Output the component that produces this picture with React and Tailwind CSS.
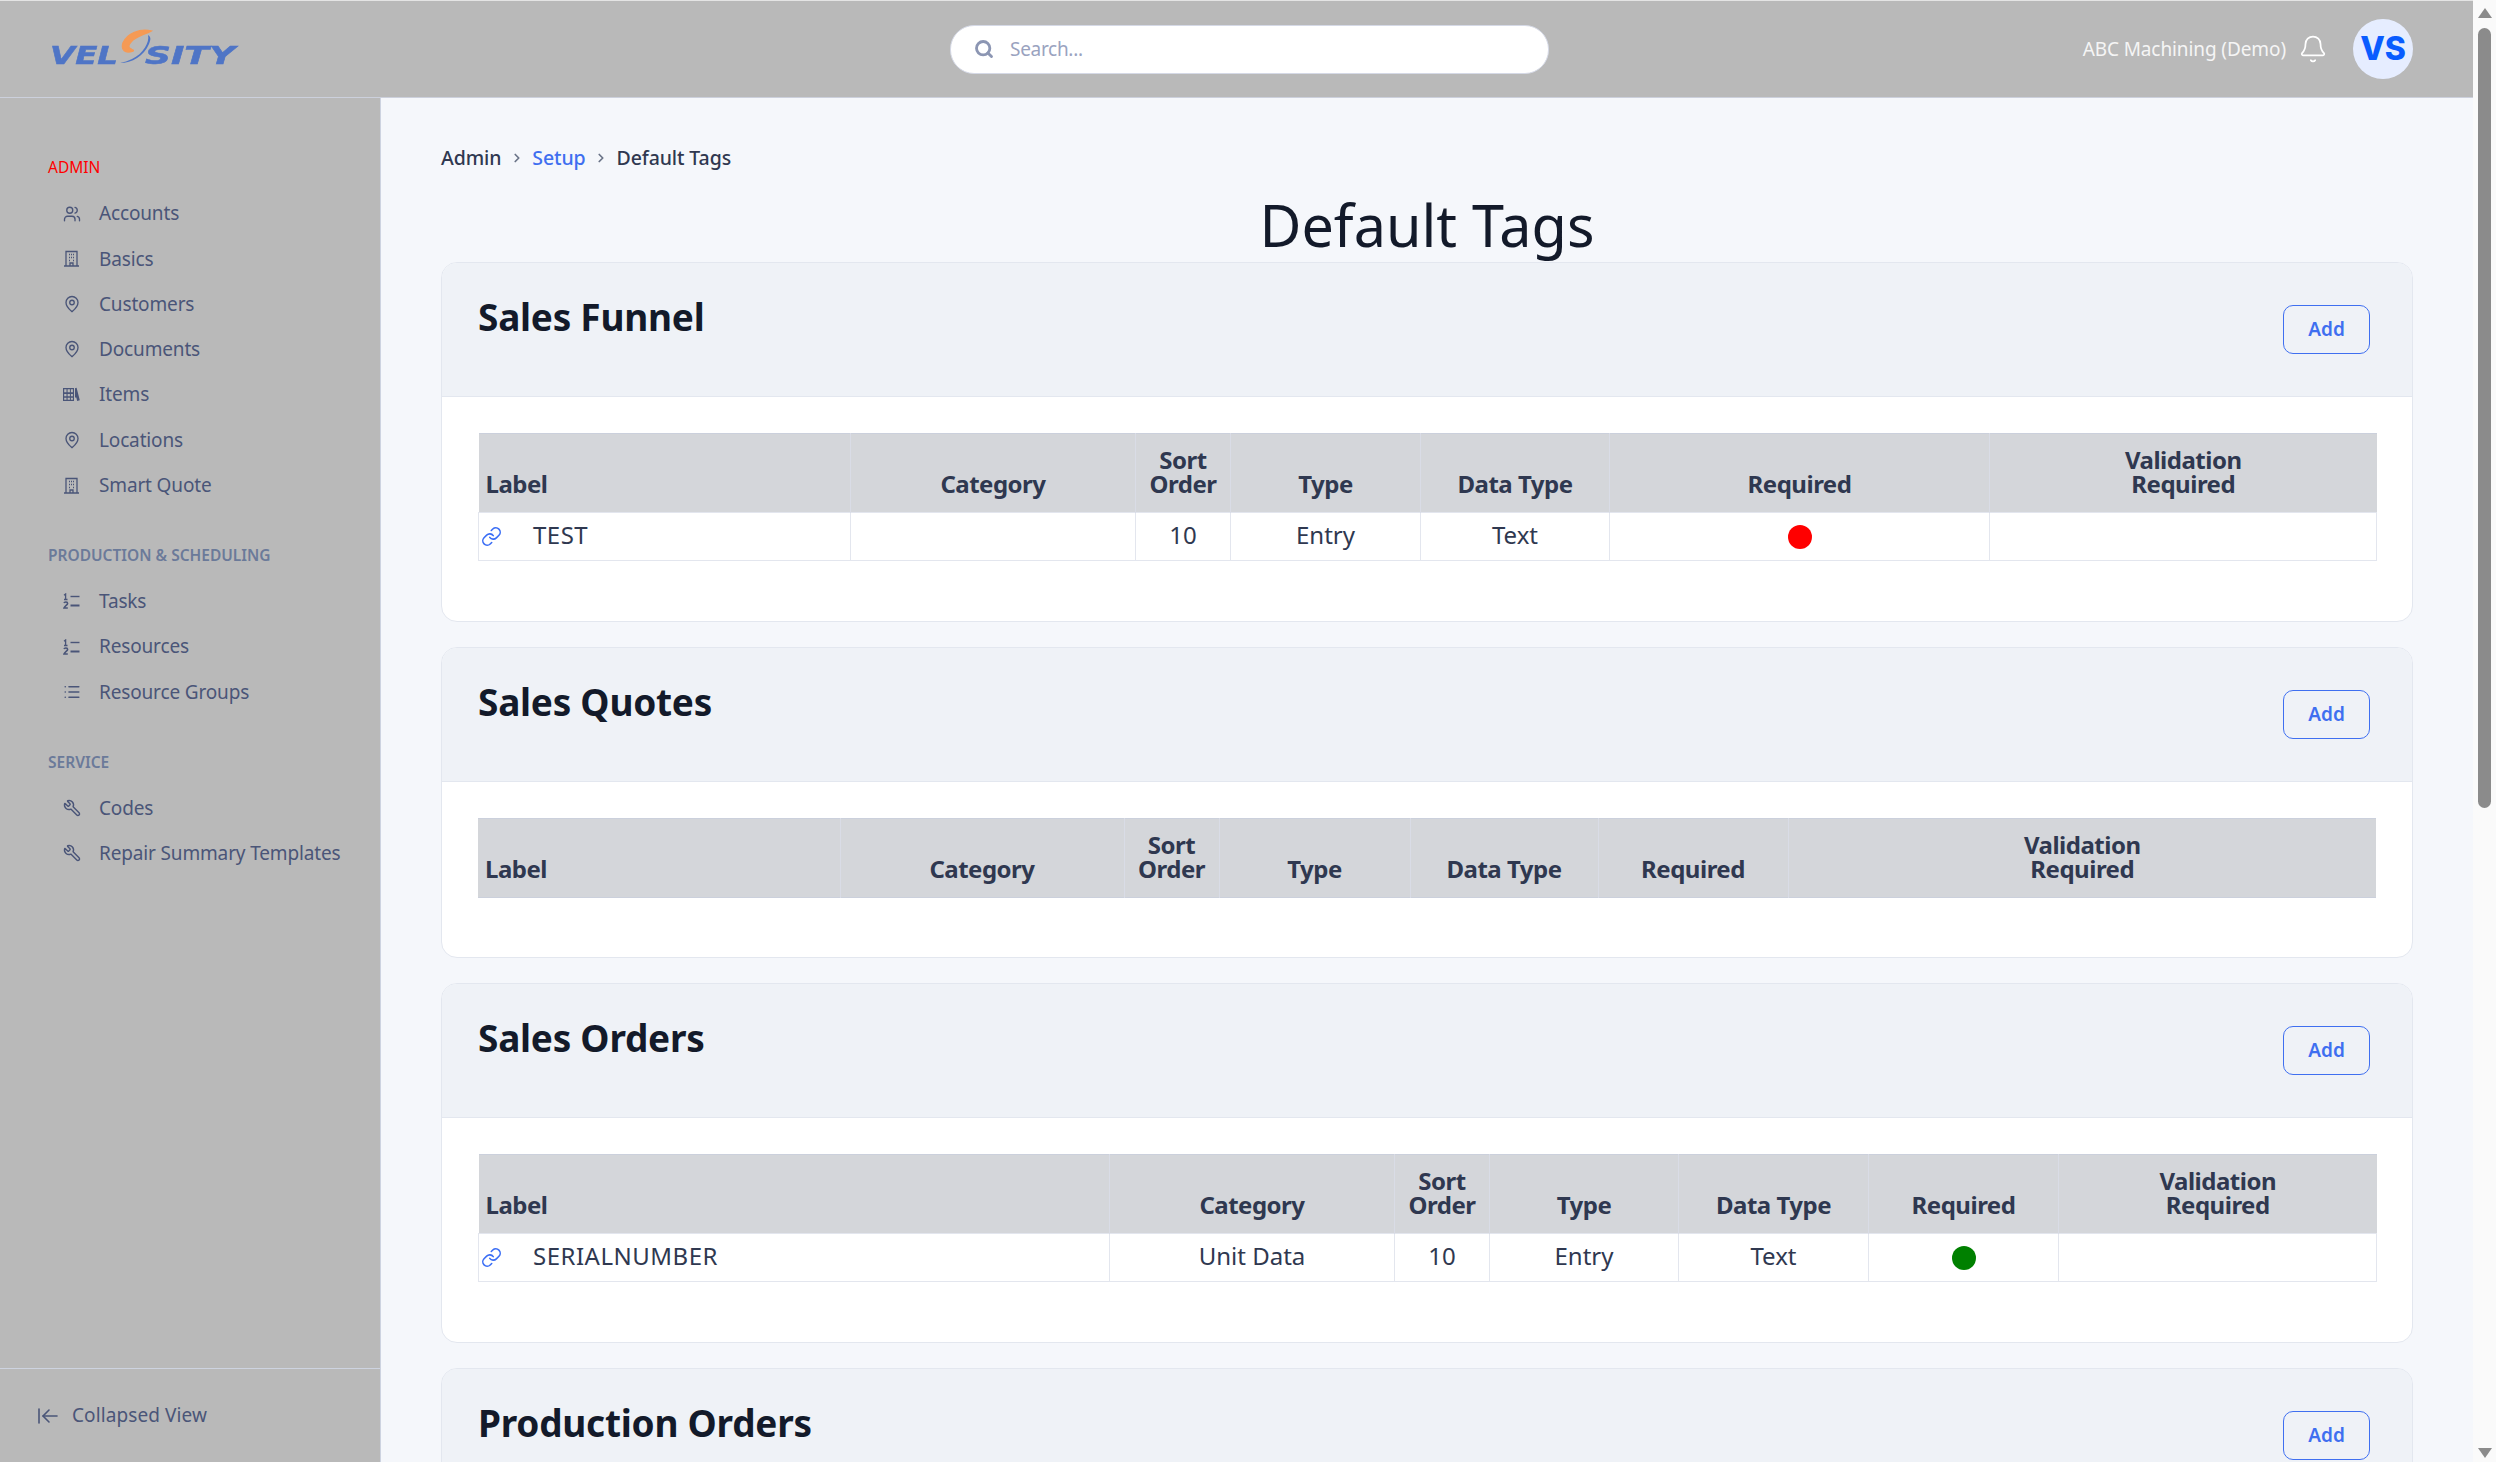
import React from "react";
import { Search, Bell, ChevronRight, Link as LinkIcon, Users, MapPin, List, Wrench, ArrowLeftToLine } from "lucide-react";

const Building = () => (
  <svg width="17" height="17" viewBox="0 0 17 17" fill="none" stroke="currentColor" strokeWidth="1.3">
    <path d="M3 16V1.5h11V16M1 16h15M7 16v-3h3v3" />
    <path d="M6 4.5h1M10 4.5h1M6 7.5h1M10 7.5h1M6 10.5h1M10 10.5h1M8 4.5h1M8 7.5h1" strokeWidth="1.5" />
  </svg>
);
const Books = () => (
  <svg width="17" height="15" viewBox="0 0 17 15" fill="currentColor">
    <path d="M0 1h11v13H0zM1.2 2.2v3h2.3v-3zm3.4 0v3h2.3v-3zm3.3 0v3h2v-3zM1.2 7v2.2h2.3V7zm3.4 0v2.2h2.3V7zm3.3 0v2.2h2V7zM1.2 10.8v2h2.3v-2zm3.4 0v2h2.3v-2zm3.3 0v2h2v-2z" fillRule="evenodd" />
    <path d="M12 1.2l1.6-.5 3.2 12.6-2.6.7-.9-3.4H12z" />
  </svg>
);
const Ordered = () => (
  <svg width="17" height="16" viewBox="0 0 17 16" fill="none" stroke="currentColor">
    <path d="M7.5 3.5H16.5" strokeWidth="1.4" />
    <path d="M7.5 12.5H16.5" strokeWidth="2" />
    <path d="M1 2.2L2.6 1V6M1 6.5H4.5" strokeWidth="1.3" />
    <path d="M1 10C1.5 8.6 4.6 8.6 4.6 10.4C4.6 11.8 1.6 12.8 1 15H4.8" strokeWidth="1.6" />
  </svg>
);

const nav = [
  { title: "ADMIN", red: true, items: [["Accounts", "users"], ["Basics", "building"], ["Customers", "pin"], ["Documents", "pin"], ["Items", "books"], ["Locations", "pin"], ["Smart Quote", "building"]] },
  { title: "PRODUCTION & SCHEDULING", items: [["Tasks", "ordered"], ["Resources", "ordered"], ["Resource Groups", "list"]] },
  { title: "SERVICE", items: [["Codes", "wrench"], ["Repair Summary Templates", "wrench"]] },
];

function NavIcon({ k }) {
  if (k === "users") return <Users size={18} strokeWidth={1.8} />;
  if (k === "building") return <Building />;
  if (k === "pin") return <MapPin size={18} strokeWidth={1.8} />;
  if (k === "books") return <Books />;
  if (k === "ordered") return <Ordered />;
  if (k === "list") return <List size={18} strokeWidth={2.2} />;
  return <Wrench size={18} strokeWidth={1.9} className="-scale-x-100" />;
}

const Logo = () => (
  <svg width="200" height="50" viewBox="0 0 200 50" className="blur-[0.4px]">
    <text x="2" y="35" textLength="68" lengthAdjust="spacingAndGlyphs" fontFamily="DejaVu Sans" fontWeight="700" fontStyle="italic" fontSize="25" fill="#4f75c6" stroke="#4f75c6" strokeWidth="0.5">VEL</text>
    <text x="97" y="35" textLength="90" lengthAdjust="spacingAndGlyphs" fontFamily="DejaVu Sans" fontWeight="700" fontStyle="italic" fontSize="25" fill="#4f75c6" stroke="#4f75c6" strokeWidth="0.5">SITY</text>
    <path d="M72 34C84 34 96 27 101 15C103 10 103 8 100 6C102 13 95 25 84 30C80 32 76 33 72 34Z" fill="#4f75c6" />
    <path d="M103 2C92-1 79 5 75 14C73 21 77 25 85 22C86 21 84 21 83 20C80 19 80 16 83 13C87 8 95 6 103 2Z" fill="#f59a55" stroke="#f59a55" strokeWidth="1.5" />
  </svg>
);

function Card({ title, widths, rows }) {
  return (
    <section className="shrink-0 overflow-hidden rounded-2xl border border-[#e3e7ef] bg-white">
      <div className="flex h-[134px] items-start justify-between border-b border-[#e3e7ef] bg-[#eff2f7] pl-[36px] pr-[42px]">
        <h2 className="mt-[29px] text-[37px] leading-[50px] font-bold tracking-[-0.25px] text-[#131a2a]">{title}</h2>
        <button className="mt-[42px] h-[49px] w-[87px] rounded-[10px] border border-[#3f6ff0] text-[19px] font-semibold text-[#3f6ff0]">Add</button>
      </div>
      {widths && (
        <div className="pt-[36px] pr-[37px] pb-[59.5px] pl-[36px]">
          <table className="w-[1898px] table-fixed border-collapse">
            <colgroup>
              {widths.map((w, i) => <col key={i} style={{ width: w }} />)}
            </colgroup>
            <thead>
              <tr className="h-[79px] border-y border-[#cbd0dc] bg-[#d4d6da] text-[24px] leading-[24px] font-bold tracking-[-0.5px] text-[#2f3850]">
                <th className="border-r border-[#d9dce6] pl-[7px] text-left align-bottom font-bold"><div className="pb-[16px]">Label</div></th>
                <th className="border-r border-[#d9dce6] align-bottom font-bold"><div className="pb-[16px]">Category</div></th>
                <th className="border-r border-[#d9dce6] align-bottom font-bold"><div className="pb-[16px]">Sort<br />Order</div></th>
                <th className="border-r border-[#d9dce6] align-bottom font-bold"><div className="pb-[16px]">Type</div></th>
                <th className="border-r border-[#d9dce6] align-bottom font-bold"><div className="pb-[16px]">Data Type</div></th>
                <th className="border-r border-[#d9dce6] align-bottom font-bold"><div className="pb-[16px]">Required</div></th>
                <th className="align-bottom font-bold"><div className="pb-[16px]">Validation<br />Required</div></th>
              </tr>
            </thead>
            <tbody>
              {rows.map((r, i) => (
                <tr key={i} className="h-[48px] text-center text-[24px] leading-[30px] text-[#2f3850]">
                  <td className="border border-[#e3e6ee] px-[2px] text-left">
                    <div className="flex items-center pb-[3px]">
                      <LinkIcon size={21} strokeWidth={1.8} className="mt-[2px] mr-[31px] text-[#3b6ef5]" />
                      <span className="tracking-[0.5px]">{r.label}</span>
                    </div>
                  </td>
                  <td className="border border-[#e3e6ee]"><div className="pb-[3px]">{r.category}</div></td>
                  <td className="border border-[#e3e6ee]"><div className="pb-[3px]">10</div></td>
                  <td className="border border-[#e3e6ee]"><div className="pb-[3px]">Entry</div></td>
                  <td className="border border-[#e3e6ee]"><div className="pb-[3px]">Text</div></td>
                  <td className="border border-[#e3e6ee]">
                    <span className={"mx-auto block size-[24px] rounded-full " + (r.color === "red" ? "bg-[#ff0000]" : "bg-[#008000]")} />
                  </td>
                  <td className="border border-[#e3e6ee]" />
                </tr>
              ))}
            </tbody>
          </table>
        </div>
      )}
    </section>
  );
}

export default function App() {
  return (
    <div className="flex h-[1462px] w-[2496px] overflow-hidden bg-[#fafafa] font-['Noto_Sans',sans-serif]">
      <div className="flex min-w-0 flex-1 flex-col">
        <header className="flex h-[98px] shrink-0 items-center border-t border-b border-t-[#e4e4e4] border-b-[#ccd0dc] bg-[#b9b9b9]">
          <div className="mt-[10px] ml-[48px] w-[200px]"><Logo /></div>
          <div className="ml-[702px] flex h-[49px] w-[599px] items-center rounded-[24px] border border-[#d5d9e6] bg-white pl-[23px]">
            <Search size={20} strokeWidth={3.4} className="text-[#8c96b3]" />
            <span className="ml-[16px] text-[19px] tracking-[-0.3px] text-[#9aa3bf]">Search...</span>
          </div>
          <div className="mr-[60px] ml-auto flex items-center">
            <span className="text-[19px] tracking-[-0.1px] text-[#f5f5f5]">ABC Machining (Demo)</span>
            <Bell size={30} strokeWidth={1.4} className="ml-[12px] text-white" />
            <div className="ml-[25px] flex size-[60px] items-center justify-center rounded-full bg-[#e6edff] font-['Inter',sans-serif] text-[32px] font-extrabold text-[#0a5cff]">VS</div>
          </div>
        </header>
        <div className="flex min-h-0 flex-1">
          <aside className="flex w-[381px] shrink-0 flex-col border-r border-[#cdd3e0] bg-[#b9b9b9]">
            <nav className="flex-1 pt-[59px] pl-[48px]">
              {nav.map((s, i) => (
                <div key={s.title} className={i ? "mt-[37px]" : ""}>
                  <div className={"mb-[14px] h-[20px] text-[15.5px] leading-[20px] " + (s.red ? "font-normal text-[#ff0000]" : "font-semibold text-[#6b7a99]")}>{s.title}</div>
                  {s.items.map(([label, k]) => (
                    <div key={label} className="flex h-[45.25px] items-center text-[19px] tracking-[-0.15px] text-[#4a5578]">
                      <span className="ml-[15px] flex w-[36px] shrink-0 text-[#4a5578]"><NavIcon k={k} /></span>
                      {label}
                    </div>
                  ))}
                </div>
              ))}
            </nav>
            <div className="flex h-[94px] items-center border-t border-[#cdd3e0] pl-[36px] text-[19px] tracking-[0.1px] text-[#4a5578]">
              <ArrowLeftToLine size={24} strokeWidth={1.6} className="mr-[12px]" />
              Collapsed View
            </div>
          </aside>
          <main className="min-w-0 flex-1 overflow-hidden bg-[#f5f7fb] px-[60px] pt-[47px]">
            <div className="flex h-[26px] items-center text-[19.5px] font-medium tracking-[-0.1px] text-[#2f3850]">
              <span>Admin</span>
              <ChevronRight size={14} strokeWidth={3} className="mx-[8.5px] text-[#6b7488]" />
              <span className="text-[#3f6ff0]">Setup</span>
              <ChevronRight size={14} strokeWidth={3} className="mx-[8.5px] text-[#6b7488]" />
              <span>Default Tags</span>
            </div>
            <h1 className="mt-[20px] h-[71px] text-center text-[57.5px] leading-[68px] text-[#131a2a]">Default Tags</h1>
            <div className="flex flex-col gap-[25px]">
              <Card title="Sales Funnel" widths={[372, 285, 95, 190, 189, 380, 387]} rows={[{ label: "TEST", category: "", color: "red" }]} />
              <Card title="Sales Quotes" widths={[362, 284, 95, 191, 188, 190, 588]} rows={[]} />
              <Card title="Sales Orders" widths={[631, 285, 95, 189, 190, 190, 318]} rows={[{ label: "SERIALNUMBER", category: "Unit Data", color: "green" }]} />
              <Card title="Production Orders" />
            </div>
          </main>
        </div>
      </div>
      <div className="relative flex w-[23px] shrink-0 flex-col items-center pt-[8px]">
        <div className="h-0 w-0 border-x-[7px] border-b-[10px] border-x-transparent border-b-[#8b8b8b]" />
        <div className="mt-[10px] h-[780px] w-[13px] rounded-full bg-[#8b8b8b]" />
        <div className="mt-auto mb-[4px] h-0 w-0 border-x-[7px] border-t-[10px] border-x-transparent border-t-[#8b8b8b]" />
      </div>
    </div>
  );
}
